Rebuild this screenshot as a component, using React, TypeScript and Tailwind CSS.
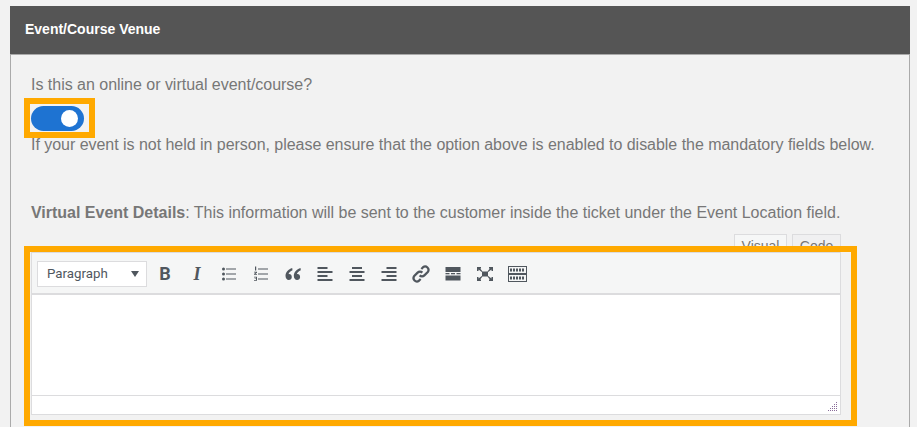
const toolIcon = "w-[16px] h-[16px] text-[#50575e]";

function ToolButton({ children }: { children: React.ReactNode }) {
	return <div className="w-[32px] h-[26px] flex items-center justify-center">{children}</div>;
}

function Lines({ rows }: { rows: [number, number][] }) {
	return (
		<svg viewBox="0 0 16 16" className={toolIcon}>
			{rows.map(([x, w], i) => (
				<rect key={i} x={x} y={1 + i * 4} width={w} height="2" fill="currentColor" />
			))}
		</svg>
	);
}

function OrangeFrame({ className }: { className: string }) {
	return <div className={`absolute border-[6px] border-[#ffa900] ${className}`} />;
}

export default function App() {
	return (
		<div
			className="relative w-[917px] h-[427px] overflow-hidden bg-[#f2f2f2] pt-[6px] pl-[10px]"
			style={{ fontFamily: '"Liberation Sans", Arial, sans-serif' }}
		>
			<div className="w-[900px]">
				<div className="h-[49px] bg-[#555555] border-b border-[#aaaaaa] flex items-center pl-[15px] pb-[1px]">
					<span className="text-white text-[14px] font-bold">Event/Course Venue</span>
				</div>
				<div className="h-[400px] border-x border-[#aaaaaa] pl-[20px] pr-[68px] text-[16px] text-[#777777]">
					<p className="pt-[20px] leading-[20px] tracking-[-0.02px]">Is this an online or virtual event/course?</p>
					<div className="mt-[11px] w-[53px] h-[25px] rounded-full bg-[#1e73d2] relative">
						<div className="absolute right-[6px] top-[4px] w-[17px] h-[17px] rounded-full bg-white" />
					</div>
					<p className="mt-[4px] leading-[20px] whitespace-nowrap tracking-[-0.033px]">
						If your event is not held in person, please ensure that the option above is enabled to disable the mandatory fields below.
					</p>
					<p className="mt-[48px] leading-[20px] whitespace-nowrap tracking-[-0.01px]">
						<b>Virtual Event Details</b>: This information will be sent to the customer inside the ticket under the Event Location field.
					</p>
					<div className="mt-[11px] flex justify-end gap-[5px] h-[18px] text-[14px] leading-[23px]">
						<div className="w-[53px] h-[18px] bg-[#f6f7f7] border border-[#dcdcde] border-b-0 text-center">Visual</div>
						<div className="w-[49px] h-[18px] bg-[#f0f0f1] border border-[#dcdcde] border-b-0 text-center">Code</div>
					</div>
					<div className="w-[810px] border border-[#dcdcde]">
						<div className="h-[42px] bg-[#f5f6f6] border-b-[2px] border-[#dcdcde] flex items-center pl-[5px] pt-[2px]">
							<div
								className="w-[110px] h-[26px] mr-[2px] bg-white border border-[#dcdcde] flex items-center justify-between pl-[9px] pr-[7px] text-[13.3px] text-[#50575e]"
								style={{ fontFamily: "Roboto, sans-serif" }}
							>
								<span>Paragraph</span>
								<span className="w-0 h-0 border-x-[4px] border-x-transparent border-t-[6px] border-t-[#50575e]" />
							</div>
							<ToolButton>
								<span className="text-[18px] font-bold text-[#50575e] leading-none" style={{ fontFamily: "Roboto, sans-serif" }}>B</span>
							</ToolButton>
							<ToolButton>
								<span className="text-[18px] font-bold italic text-[#50575e] leading-none" style={{ fontFamily: '"Liberation Serif", serif' }}>I</span>
							</ToolButton>
							<ToolButton>
								<svg viewBox="0 0 16 16" className={toolIcon} fill="currentColor">
									<circle cx="2.500" cy="3" r="1.500" />
									<circle cx="2.500" cy="8" r="1.500" />
									<circle cx="2.500" cy="13" r="1.500" />
									<rect x="5" y="2.500" width="10" height="1" />
									<rect x="5" y="7.500" width="10" height="1" />
									<rect x="5" y="12.500" width="10" height="1" />
								</svg>
							</ToolButton>
							<ToolButton>
								<svg viewBox="0 0 16 16" className={toolIcon} fill="currentColor">
									<path d="M2 0.500h1.200v4H2zM1 5.800h3v1l-1.600 1.200H4v.8H1v-.9l1.700-1.300H1zM1 10.800h3v3.900H1v-.8h2v-.8H1.600v-.7H3v-.8H1z" />
									<rect x="5" y="2.500" width="10" height="1" />
									<rect x="5" y="7.500" width="10" height="1" />
									<rect x="5" y="12.500" width="10" height="1" />
								</svg>
							</ToolButton>
							<ToolButton>
								<svg viewBox="0 0 16 16" className={toolIcon} fill="currentColor">
									<path d="M7.200 2C3.500 3.300.5 6 .5 9.800.5 12.300 1.900 14 3.800 14c1.700 0 3-1.300 3-3 0-1.600-1.100-2.900-2.600-2.900-.3 0-.5 0-.7.1.4-1.600 2-3 4-3.900zM15.500 2c-3.700 1.300-6.700 4-6.700 7.800 0 2.500 1.400 4.200 3.300 4.200 1.700 0 3-1.300 3-3 0-1.600-1.100-2.900-2.600-2.900-.3 0-.5 0-.7.1.4-1.600 2-3 4-3.900z" />
								</svg>
							</ToolButton>
							<ToolButton>
								<Lines rows={[[0.5, 10], [0.5, 15], [0.5, 10], [0.5, 15]]} />
							</ToolButton>
							<ToolButton>
								<Lines rows={[[3, 10], [0.5, 15], [3, 10], [0.5, 15]]} />
							</ToolButton>
							<ToolButton>
								<Lines rows={[[5.500, 10], [0.5, 15], [5.500, 10], [0.5, 15]]} />
							</ToolButton>
							<ToolButton>
								<svg viewBox="0 0 16 16" className="w-[18px] h-[18px] text-[#50575e]" fill="none" stroke="currentColor" strokeWidth="2">
									<path d="M6.800 9.200a3 3 0 0 0 4.200 0l3-3a3 3 0 0 0-4.200-4.200L8.300 3.500" />
									<path d="M9.200 6.800a3 3 0 0 0-4.200 0l-3 3a3 3 0 0 0 4.200 4.200l1.500-1.500" />
								</svg>
							</ToolButton>
							<ToolButton>
								<svg viewBox="0 0 16 16" className={toolIcon} fill="currentColor">
									<rect x="0.500" y="1" width="15" height="5" />
									<rect x="0.500" y="7" width="4" height="1.300" />
									<rect x="6" y="7" width="4" height="1.300" />
									<rect x="11.500" y="7" width="4" height="1.300" />
									<rect x="0.500" y="9.500" width="15" height="5" />
								</svg>
							</ToolButton>
							<ToolButton>
								<svg viewBox="0 0 18 16" className="w-[18px] h-[16px] text-[#50575e]" fill="currentColor">
									<rect x="6" y="5.500" width="6" height="5" />
									<path d="M1 1h4v1.500H4.200L6.500 5.500 5.800 6 2.500 3.500V5H1zM17 1v4h-1.500V3.500L12.200 6l-.7-.5L13.800 2.500H13V1zM1 15v-4h1.500v1.500L5.800 10l.7.5L4.200 13.500H5V15zM17 15h-4v-1.500h.8L11.500 10.500l.7-.5 3.300 2.500V11H17z" />
								</svg>
							</ToolButton>
							<ToolButton>
								<svg viewBox="0 0 19 16" className="w-[19px] h-[16px] text-[#50575e]" fill="none" stroke="currentColor">
									<rect x="0.500" y="0.500" width="18" height="7" />
									<rect x="0.500" y="8.500" width="18" height="7" />
									<path d="M2 4h15M2 12h15" strokeWidth="3" strokeDasharray="2 1" />
								</svg>
							</ToolButton>
						</div>
						<div className="h-[100px] bg-white" />
						<div className="h-[19px] bg-white border-t border-[#dcdcde] relative">
							<svg viewBox="0 0 10 10" className="absolute right-[2px] bottom-[2px] w-[10px] h-[10px] text-[#8a6d9a]" fill="currentColor">
								<rect x="8" y="0" width="1" height="1" />
								<rect x="8" y="2" width="1" height="1" />
								<rect x="6" y="2" width="1" height="1" />
								<rect x="8" y="4" width="1" height="1" />
								<rect x="6" y="4" width="1" height="1" />
								<rect x="4" y="4" width="1" height="1" />
								<rect x="8" y="6" width="1" height="1" />
								<rect x="6" y="6" width="1" height="1" />
								<rect x="4" y="6" width="1" height="1" />
								<rect x="2" y="6" width="1" height="1" />
								<rect x="8" y="8" width="1" height="1" />
								<rect x="6" y="8" width="1" height="1" />
								<rect x="4" y="8" width="1" height="1" />
								<rect x="2" y="8" width="1" height="1" />
								<rect x="0" y="8" width="1" height="1" />
							</svg>
						</div>
					</div>
				</div>
			</div>
			<OrangeFrame className="left-[24px] top-[98px] w-[71px] h-[40px]" />
			<OrangeFrame className="left-[24px] top-[246px] w-[833px] h-[180px]" />
		</div>
	);
}
